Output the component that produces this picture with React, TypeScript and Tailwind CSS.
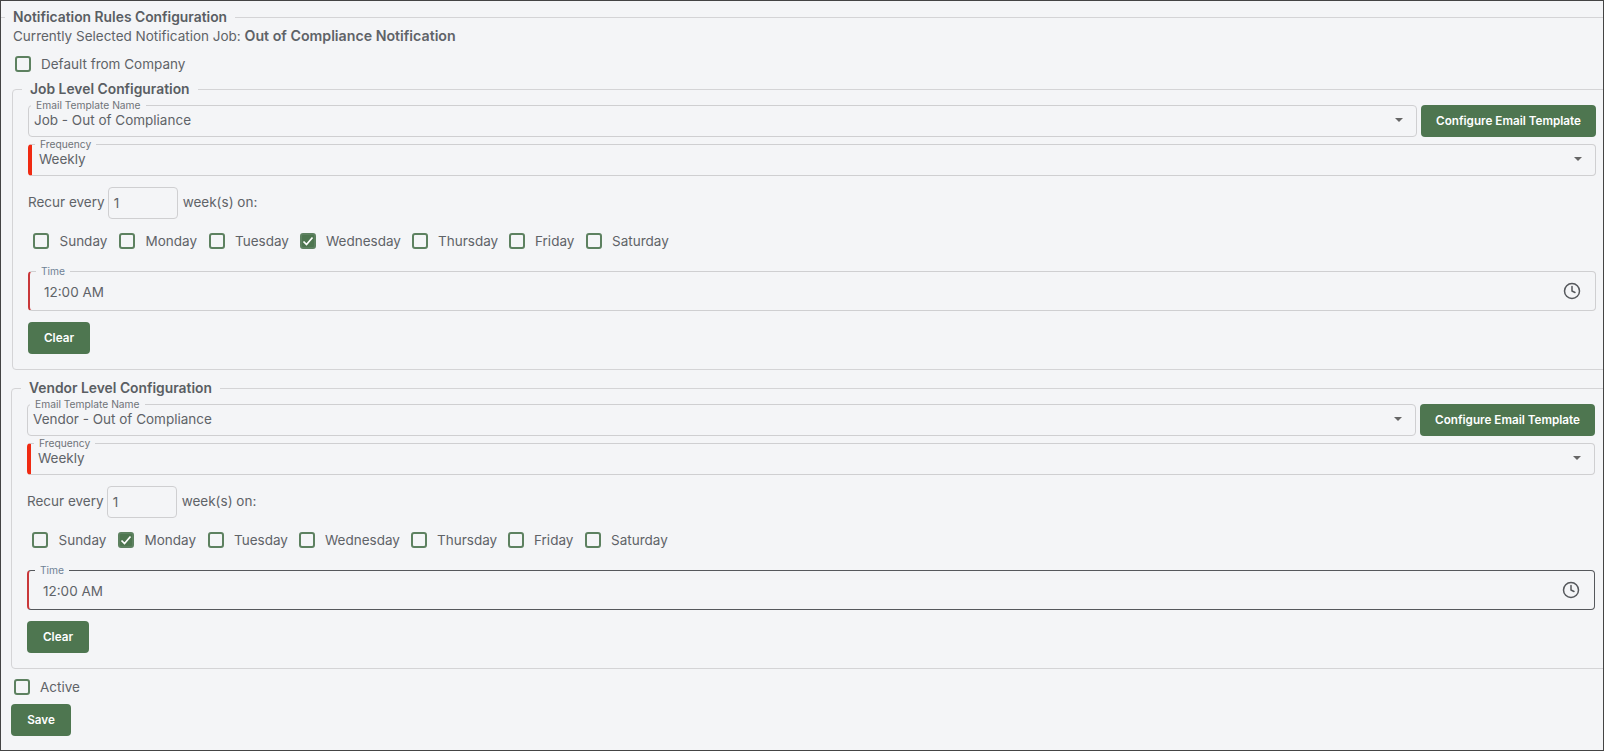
import { Clock } from 'lucide-react'
import clsx from 'clsx'

const DAYS: [string, string][] = [
  ['Sunday', 'w-[86px]'],
  ['Monday', 'w-[89.5px]'],
  ['Tuesday', 'w-[91px]'],
  ['Wednesday', 'w-[112px]'],
  ['Thursday', 'w-[97px]'],
  ['Friday', 'w-[77px]'],
  ['Saturday', 'w-auto'],
]

function Check({ on }: { on?: boolean }) {
  return (
    <span
      className={clsx(
        'flex h-4 w-4 shrink-0 items-center justify-center rounded-[3px] border-2 border-[#5d8160]',
        on && 'bg-[#4e7650]',
      )}
    >
      {on && (
        <svg viewBox="0 0 12 12" className="h-3 w-3" fill="none" stroke="#fff" strokeWidth="1.7">
          <path d="M1.5 6.5 4.5 9.5 10.5 2.5" />
        </svg>
      )}
    </span>
  )
}

function Arrow() {
  return (
    <svg viewBox="0 0 8 4" className="absolute right-[13px] top-[7px] h-1 w-2" fill="#666">
      <path d="M0 0h8L4 4z" />
    </svg>
  )
}

function SelectField({ label, value, required }: { label: string; value: string; required?: boolean }) {
  return (
    <fieldset
      className={clsx(
        'relative h-[38px] min-w-0 rounded-[4px] border border-[#cfcfd1]',
        required ? 'border-l-4 border-l-[#f02a12] pl-[7px]' : 'pl-[5px]',
      )}
    >
      <legend className={clsx('px-[5px] text-[10.25px] leading-[12px] text-[#6f7378]', required ? 'ml-[-4px]' : 'ml-[-3px]')}>
        {label}
      </legend>
      <div className="text-[13.5px] leading-[18px] text-[#5f6368]">{value}</div>
      <Arrow />
    </fieldset>
  )
}

function Btn({ children, className }: { children: string; className: string }) {
  return (
    <button className={clsx('h-8 rounded-[4px] bg-[#4e7650] pt-px text-[11.7px] font-semibold text-white', className)}>
      {children}
    </button>
  )
}

function LevelConfig({ title, template, checked, focused, className }: {
  title: string
  template: string
  checked: string
  focused?: boolean
  className: string
}) {
  return (
    <fieldset className={clsx('w-[1620px] min-w-0 rounded-[4px] border border-[#d4d4d6] pb-[15px] pl-[15px]', className)}>
      <legend className="ml-[-6px] px-2 text-[13.85px] font-semibold leading-[20px] text-[#5a5e63]">{title}</legend>
      <div className="flex w-[1568px] flex-col">
        <div className="flex gap-1">
          <div className="flex-1">
            <SelectField label="Email Template Name" value={template} />
          </div>
          <Btn className="mt-[6px] w-[175px]">Configure Email Template</Btn>
        </div>
        <div className="mt-px">
          <SelectField label="Frequency" value="Weekly" required />
        </div>
        <div className="mt-[11px] flex items-center text-[13.5px] text-[#5f6368]">
          <span className="mb-[2px]">Recur every</span>
          <span className="ml-[3px] flex h-8 w-[70px] items-center rounded-[4px] border border-[#cfcfd1] pl-[5px]">1</span>
          <span className="mb-[2px] ml-[5px]">week(s) on:</span>
        </div>
        <div className="mt-[14px] flex h-4 items-center pl-[5px] text-[13.5px] text-[#5f6368]">
          {DAYS.map(([d, w]) => (
            <label key={d} className={clsx('flex items-center gap-[10.5px]', w)}>
              <Check on={d === checked} />
              <span>{d}</span>
            </label>
          ))}
        </div>
        <fieldset
          className={clsx(
            'relative mt-4 h-[46px] min-w-0 rounded-[4px] border border-l-2 border-l-[#c9383a] pl-[14px]',
            focused ? 'border-[#55585c]' : 'border-[#cfcfd1]',
          )}
        >
          <legend className="ml-[-8px] px-[5px] text-[10.25px] leading-[12px] text-[#6f8296]">Time</legend>
          <div className="mt-[6px] text-[13.5px] leading-[18px] text-[#5f6368]">12:00 AM</div>
          <Clock className="absolute right-[14px] top-[5px] h-[18px] w-[18px] text-[#55585c]" strokeWidth={2} />
        </fieldset>
        <Btn className="mt-[11px] w-[62px]">Clear</Btn>
      </div>
    </fieldset>
  )
}

export default function App() {
  return (
    <div className="h-[751px] w-[1604px] overflow-hidden border border-[#444] bg-[#f4f5f7] font-['Inter',sans-serif]">
      <div className="pt-[6px]">
        <div className="flex items-center">
          <div className="h-px w-[4px] bg-[#d4d4d6]" />
          <h2 className="px-2 text-[13.85px] font-semibold leading-[20px] text-[#5a5e63]">Notification Rules Configuration</h2>
          <div className="h-px flex-1 bg-[#d4d4d6]" />
        </div>
        <p className="ml-3 mt-[-1px] text-[13.5px] leading-[20px] text-[#5f6368]">
          Currently Selected Notification Job: <b className="text-[14.2px] font-semibold">Out of Compliance Notification</b>
        </p>
        <label className="ml-[14px] mt-2 flex items-center gap-[10px] text-[13.5px] leading-[20px] text-[#5f6368]">
          <Check />
          <span>Default from Company</span>
        </label>
        <LevelConfig
          className="ml-[11px] mt-[5px]"
          title="Job Level Configuration"
          template="Job - Out of Compliance"
          checked="Wednesday"
        />
        <LevelConfig
          className="ml-[10px] mt-[8px]"
          title="Vendor Level Configuration"
          template="Vendor - Out of Compliance"
          checked="Monday"
          focused
        />
        <label className="ml-[13px] mt-[9px] flex items-center gap-[10px] text-[13.5px] leading-[18px] text-[#5f6368]">
          <Check />
          <span>Active</span>
        </label>
        <Btn className="ml-[10px] mt-[8px] w-[60px]">Save</Btn>
      </div>
    </div>
  )
}
